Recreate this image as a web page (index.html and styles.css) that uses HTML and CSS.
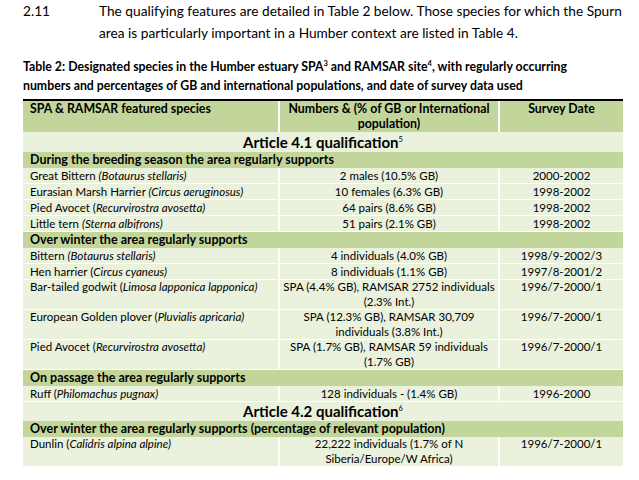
FILE: index.html
```html
<!DOCTYPE html>
<html>
<head>
<meta charset="utf-8">
<link rel="stylesheet" href="styles.css">
</head>
<body>
<div class="page">
  <div class="para">
    <span class="num">2.11</span>
    <p class="text">The qualifying features are detailed in Table 2 below. Those species for which the Spurn<br>area is particularly important in a Humber context are listed in Table 4.</p>
  </div>
  <p class="caption">Table 2: Designated species in the Humber estuary SPA<sup>3</sup> and RAMSAR site<sup>4</sup>, with regularly occurring<br>numbers and percentages of GB and international populations, and date of survey data used</p>
  <table class="species">
    <colgroup><col class="c1"><col class="c2"><col class="c3"></colgroup>
    <thead>
      <tr class="head">
        <th class="left">SPA &amp; RAMSAR featured species</th>
        <th>Numbers &amp; (% of GB or International<br>population)</th>
        <th>Survey Date</th>
      </tr>
    </thead>
    <tbody>
      <tr class="article"><td colspan="3">Article 4.1 qualification<sup>5</sup></td></tr>
      <tr class="section"><td colspan="3">During the breeding season the area regularly supports</td></tr>
      <tr><td>Great Bittern <i>(Botaurus stellaris)</i></td><td>2 males (10.5% GB)</td><td>2000-2002</td></tr>
      <tr><td>Eurasian Marsh Harrier <i>(Circus aeruginosus)</i></td><td>10 females (6.3% GB)</td><td>1998-2002</td></tr>
      <tr><td>Pied Avocet (<i>Recurvirostra avosetta)</i></td><td>64 pairs (8.6% GB)</td><td>1998-2002</td></tr>
      <tr><td>Little tern <i>(Sterna albifrons)</i></td><td>51 pairs (2.1% GB)</td><td>1998-2002</td></tr>
      <tr class="section"><td colspan="3">Over winter the area regularly supports</td></tr>
      <tr><td>Bittern <i>(Botaurus stellaris)</i></td><td>4 individuals (4.0% GB)</td><td>1998/9-2002/3</td></tr>
      <tr><td>Hen harrier (<i>Circus cyaneus)</i></td><td>8 individuals (1.1% GB)</td><td>1997/8-2001/2</td></tr>
      <tr class="tall"><td>Bar-tailed godwit (<i>Limosa lapponica lapponica)</i></td><td>SPA (4.4% GB), RAMSAR 2752 individuals<br>(2.3% Int.)</td><td>1996/7-2000/1</td></tr>
      <tr class="tall"><td>European Golden plover (<i>Pluvialis apricaria)</i></td><td>SPA (12.3% GB), RAMSAR 30,709<br>individuals (3.8% Int.)</td><td>1996/7-2000/1</td></tr>
      <tr class="tall"><td>Pied Avocet (<i>Recurvirostra avosetta)</i></td><td>SPA (1.7% GB), RAMSAR 59 individuals<br>(1.7% GB)</td><td>1996/7-2000/1</td></tr>
      <tr class="section"><td colspan="3">On passage the area regularly supports</td></tr>
      <tr><td>Ruff (<i>Philomachus pugnax)</i></td><td>128 individuals - (1.4% GB)</td><td>1996-2000</td></tr>
      <tr class="article a2"><td colspan="3">Article 4.2 qualification<sup>6</sup></td></tr>
      <tr class="section"><td colspan="3">Over winter the area regularly supports (percentage of relevant population)</td></tr>
      <tr class="tall"><td>Dunlin (<i>Calidris alpina alpine)</i></td><td>22,222 individuals (1.7% of N<br>Siberia/Europe/W Africa)</td><td>1996/7-2000/1</td></tr>
    </tbody>
  </table>
</div>
</body>
</html>
```
FILE: styles.css
```css
html, body {
  margin: 0;
  padding: 0;
  background: #ffffff;
}
body {
  font-family: Lato, "Open Sans", sans-serif;
  color: #000000;
}
.page {
  padding: 0 16px 0 23px;
}
.para {
  display: flex;
  font-size: 13.7px;
  line-height: 22px;
}
.num {
  width: 76px;
  flex: none;
}
.text {
  margin: 0;
  white-space: nowrap;
}
.caption {
  margin: 13px 0 4px 0;
  font-size: 12.3px;
  font-weight: bold;
  line-height: 19px;
  white-space: nowrap;
}
.caption sup {
  font-size: 7.5px;
  line-height: 0;
}
.species {
  width: 600px;
  border-collapse: separate;
  border-spacing: 0;
  border-top: 2px solid #000000;
  font-size: 11.5px;
  line-height: 15px;
  table-layout: fixed;
}
.c1 { width: 257px; }
.c2 { width: 220px; }
.c3 { width: 123px; }
.species td, .species th {
  padding: 0 2px;
  vertical-align: top;
  text-align: center;
  white-space: nowrap;
  background: #eaf1dd;
  border-bottom: 1px solid #ffffff;
  border-right: 2px solid #ffffff;
}
.species td:last-child, .species th:last-child {
  border-right: 0;
}
.species td:first-child, .species th.left {
  text-align: left;
  padding-left: 7px;
}
.species tr.tall td {
  line-height: 14.5px;
}
.head th {
  background: #c2d69b;
  font-weight: bold;
  font-size: 12.35px;
  line-height: 15px;
  height: 31px;
  box-sizing: border-box;
  padding-top: 0;
  border-bottom: 0;
}
.species tr.article td {
  text-align: center;
  font-weight: bold;
  font-size: 15px;
  line-height: 20px;
  padding: 0;
  border: 0;
}
.species tr.article.a2 td {
  line-height: 19px;
}
.article sup {
  font-size: 7.5px;
  font-weight: normal;
  line-height: 0;
}
.species tr.section td {
  background: #c2d69b;
  font-weight: bold;
  font-size: 12.5px;
  line-height: 16px;
  border: 0;
  text-align: left;
}
```
